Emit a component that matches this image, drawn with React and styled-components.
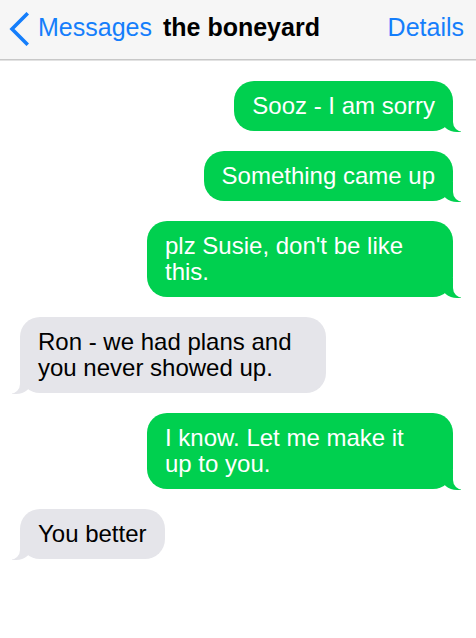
import React from "react";
import styled, { createGlobalStyle, css } from "styled-components";

const GlobalStyle = createGlobalStyle`
  html, body {
    margin: 0;
    padding: 0;
    background: #ffffff;
    font-family: "Liberation Sans", Arial, sans-serif;
  }
`;

const GREEN = "#00d04f";
const GRAY = "#e5e5ea";

const Page = styled.div`
  width: 476px;
  min-height: 638px;
  background: #fff;
`;

const Header = styled.header`
  height: 60px;
  box-sizing: border-box;
  display: flex;
  align-items: center;
  padding: 0 12px 5px 9px;
  background: #f6f6f6;
  border-bottom: 1px solid #c8c8c8;
  box-shadow: 0 1px 0 #e2e2e2;
  font-size: 25px;
`;

const Back = styled.div`
  display: flex;
  align-items: center;
  gap: 9px;
  color: #157efb;
`;

const Chevron = styled.svg`
  width: 20px;
  height: 34px;
  margin-top: 3px;
`;

const Title = styled.div`
  margin-left: 11px;
  font-weight: 700;
  color: #000;
  flex: 1;
`;

const Details = styled.div`
  color: #157efb;
`;

const Thread = styled.div`
  display: flex;
  flex-direction: column;
  gap: 20px;
  padding: 21px 23px 20px 20px;
`;

const Bubble = styled.div`
  position: relative;
  box-sizing: border-box;
  max-width: 306px;
  padding: 12px 18px;
  border-radius: 20px;
  font-size: 24px;
  line-height: 26px;

  &::before,
  &::after {
    content: "";
    position: absolute;
    bottom: -1px;
    height: 20px;
  }

  ${(p) =>
    p.$mine
      ? css`
          align-self: flex-end;
          background: ${GREEN};
          color: #fff;

          &::before {
            right: -8px;
            border-right: 20px solid ${GREEN};
            border-bottom-left-radius: 16px 14px;
          }
          &::after {
            right: -26px;
            width: 26px;
            background: #fff;
            border-bottom-left-radius: 10px;
          }
        `
      : css`
          align-self: flex-start;
          background: ${GRAY};
          color: #000;

          &::before {
            left: -8px;
            border-left: 20px solid ${GRAY};
            border-bottom-right-radius: 16px 14px;
          }
          &::after {
            left: -26px;
            width: 26px;
            background: #fff;
            border-bottom-right-radius: 10px;
          }
        `}
`;

const messages = [
  { mine: true, text: "Sooz - I am sorry" },
  { mine: true, text: "Something came up" },
  { mine: true, text: "plz Susie, don't be like this." },
  { mine: false, text: "Ron - we had plans and you never showed up." },
  { mine: true, text: "I know. Let me make it up to you." },
  { mine: false, text: "You better" },
];

export default function App() {
  return (
    <Page>
      <GlobalStyle />
      <Header>
        <Back>
          <Chevron viewBox="0 0 20 34">
            <polyline
              points="17.5,2.5 3,17 17.5,31.5"
              fill="none"
              stroke="#157efb"
              strokeWidth="3.6"
              strokeLinecap="square"
            />
          </Chevron>
          <span>Messages</span>
        </Back>
        <Title>the boneyard</Title>
        <Details>Details</Details>
      </Header>
      <Thread>
        {messages.map((m, i) => (
          <Bubble key={i} $mine={m.mine}>
            {m.text}
          </Bubble>
        ))}
      </Thread>
    </Page>
  );
}
